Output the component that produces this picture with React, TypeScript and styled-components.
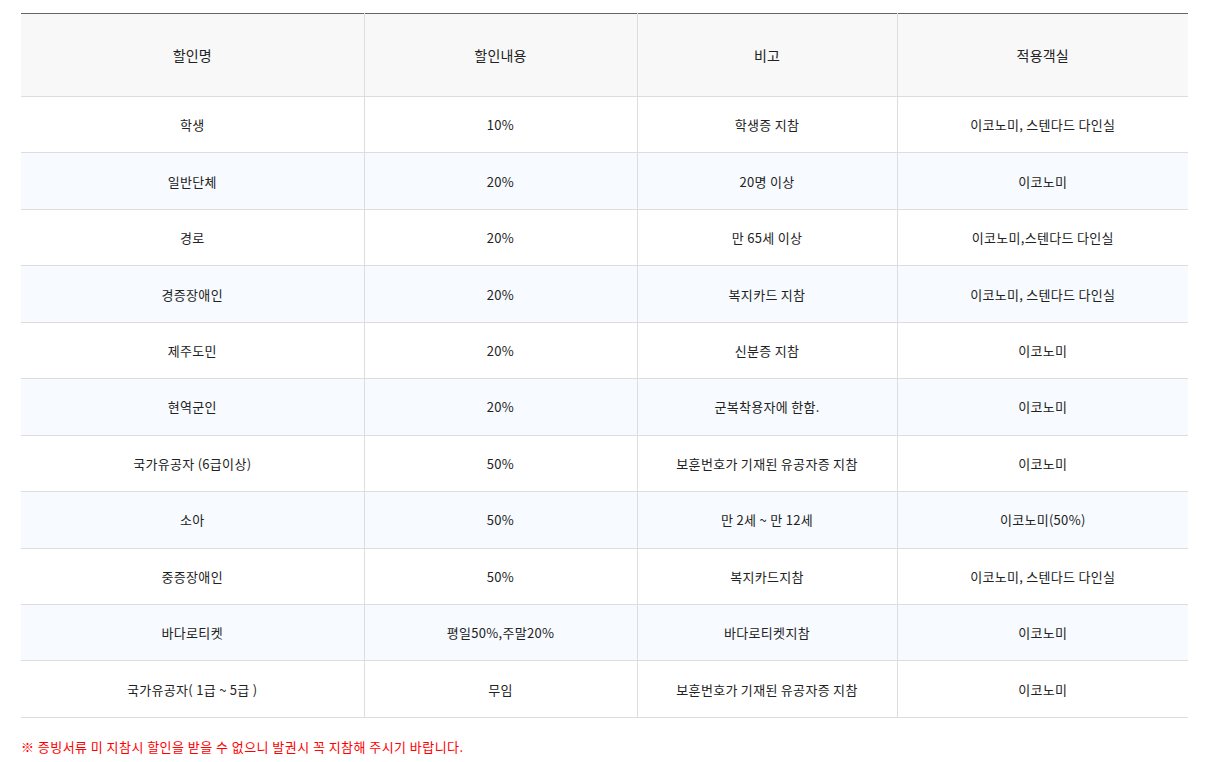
import { createGlobalStyle, styled } from "styled-components";

const rows: [string, string, string, string][] = [
  ["학생", "10%", "학생증 지참", "이코노미, 스텐다드 다인실"],
  ["일반단체", "20%", "20명 이상", "이코노미"],
  ["경로", "20%", "만 65세 이상", "이코노미,스텐다드 다인실"],
  ["경증장애인", "20%", "복지카드 지참", "이코노미, 스텐다드 다인실"],
  ["제주도민", "20%", "신분증 지참", "이코노미"],
  ["현역군인", "20%", "군복착용자에 한함.", "이코노미"],
  ["국가유공자 (6급이상)", "50%", "보훈번호가 기재된 유공자증 지참", "이코노미"],
  ["소아", "50%", "만 2세 ~ 만 12세", "이코노미(50%)"],
  ["중증장애인", "50%", "복지카드지참", "이코노미, 스텐다드 다인실"],
  ["바다로티켓", "평일50%,주말20%", "바다로티켓지참", "이코노미"],
  ["국가유공자( 1급 ~ 5급 )", "무임", "보훈번호가 기재된 유공자증 지참", "이코노미"],
];

function App() {
  return (
    <Page>
      <GlobalStyle />
      <Table>
        <colgroup>
          <col style={{ width: 343 }} />
          <col style={{ width: 273 }} />
          <col style={{ width: 260 }} />
          <col />
        </colgroup>
        <thead>
          <tr>
            <Th>할인명</Th>
            <Th>할인내용</Th>
            <Th>비고</Th>
            <Th>적용객실</Th>
          </tr>
        </thead>
        <tbody>
          {rows.map((r, i) => (
            <Row key={i} $striped={i % 2 === 1}>
              {r.map((c, j) => (
                <Td key={j}>{c}</Td>
              ))}
            </Row>
          ))}
        </tbody>
      </Table>
      <Notice>※ 증빙서류 미 지참시 할인을 받을 수 없으니 발권시 꼭 지참해 주시기 바랍니다.</Notice>
    </Page>
  );
}

export default App;

const GlobalStyle = createGlobalStyle`
  body {
    margin: 0;
    background: #fff;
    font-family: "Noto Sans CJK KR", "Noto Sans", sans-serif;
    color: #222;
  }
`;

const Page = styled.div`
  padding: 13px 17px 0 21px;
`;

const Table = styled.table`
  width: 1167px;
  border-collapse: collapse;
  table-layout: fixed;
  border-top: 1px solid #666;
`;

const Th = styled.th`
  height: 82px;
  padding: 0;
  background: #f8f8f8;
  font-size: 14px;
  font-weight: 400;
  letter-spacing: 0.2px;
  color: #222;
  border-bottom: 1px solid #ddd;
  border-left: 1px solid #ddd;

  &:first-child {
    border-left: none;
  }
`;

const Row = styled.tr<{ $striped: boolean }>`
  background: ${(p) => (p.$striped ? "#f7faff" : "#fff")};
`;

const Td = styled.td`
  height: 55.45px;
  padding: 0;
  text-align: center;
  font-size: 13px;
  letter-spacing: 0.3px;
  color: #222;
  border-bottom: 1px solid #ddd;
  border-left: 1px solid #ddd;

  &:first-child {
    border-left: none;
  }
`;

const Notice = styled.p`
  margin: 19px 0 0;
  font-size: 13px;
  letter-spacing: 0.45px;
  color: #f00;
`;
